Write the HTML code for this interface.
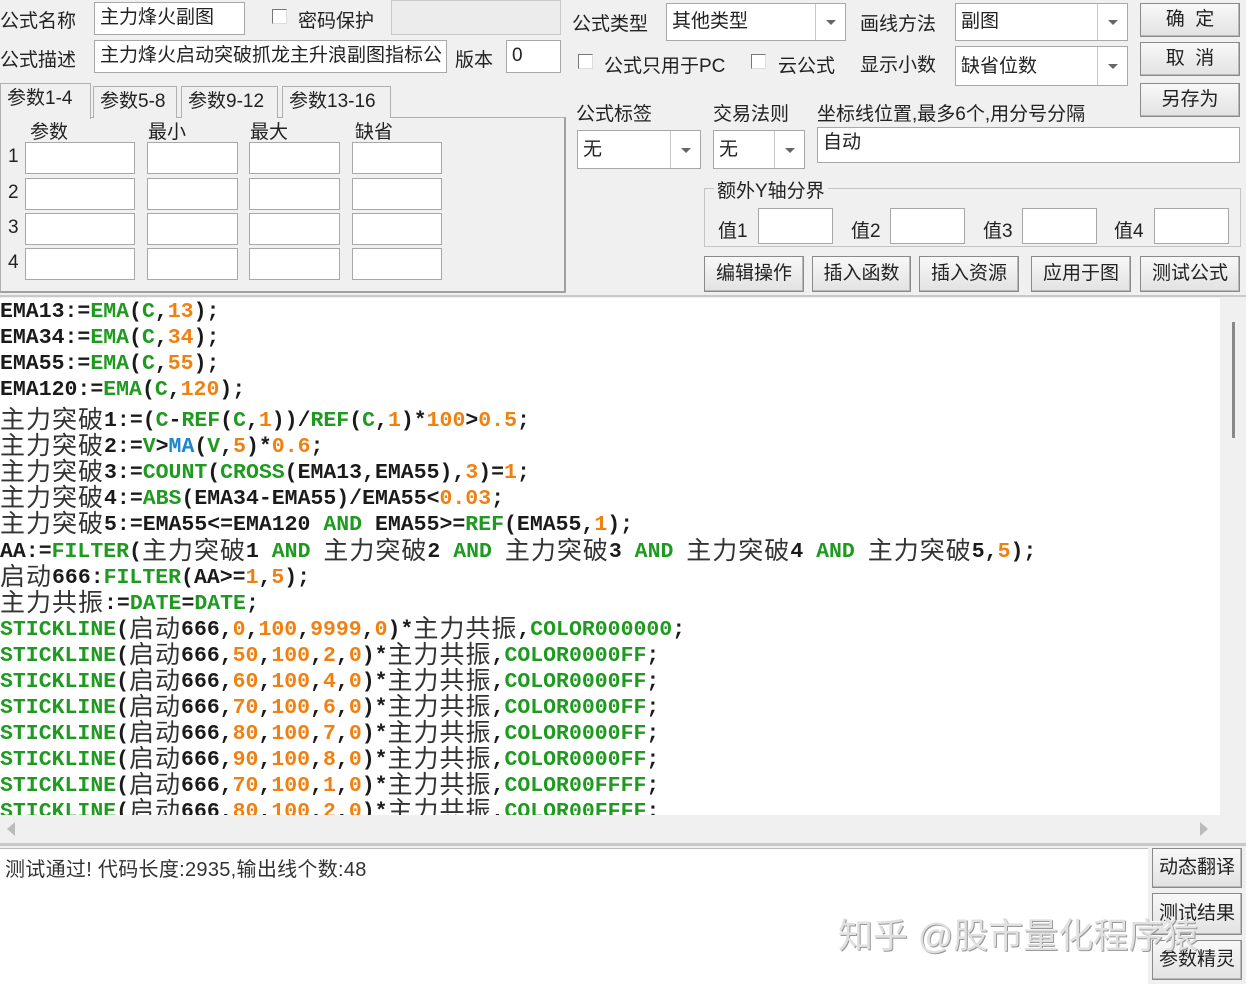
<!DOCTYPE html>
<html><head><meta charset="utf-8"><style>
*{box-sizing:border-box;margin:0;padding:0}
body{width:1246px;height:984px;background:#f0f0f0;position:relative;overflow:hidden;font-family:"Liberation Sans","Noto Sans CJK SC",sans-serif;font-size:19px;color:#222}
.a{position:absolute;white-space:nowrap}
.in{position:absolute;background:#fff;border:1px solid #a8a8a8;padding-left:5px;line-height:30px}
.btn{position:absolute;background:linear-gradient(#f8f8f8,#e2e2e2);border:1px solid #8a8a8a;box-shadow:inset -1px -1px 0 #b8b8b8;text-align:center;font-size:19px;color:#222}
.cb{position:absolute;width:15px;height:15px;background:#fff;border:1px solid #777;border-right-color:#ddd;border-bottom-color:#ddd}
.cmb{position:absolute;background:#fff;border:1px solid #a8a8a8;padding-left:5px}
.cmb i{position:absolute;right:0;top:0;bottom:0;width:30px;border-left:1px solid #c8c8c8;background:#fff}
.cmb i:after{content:"";position:absolute;left:10px;top:50%;margin-top:-2px;border-left:5px solid transparent;border-right:5px solid transparent;border-top:5px solid #666}
.tab{position:absolute;top:86px;height:32px;border:1px solid #b0b0b0;border-bottom:none;background:#f0f0f0;padding:0 6px;line-height:30px;font-size:19px}
#code{position:absolute;left:0;top:298px;width:1220px;height:517px;background:#fff;overflow:hidden}
.l{position:absolute;left:0;height:26px;line-height:26px;font-family:"Liberation Mono",monospace;font-weight:bold;font-size:21.5px;color:#1a1a1a;white-space:pre}
.g{color:#1f9a20}.o{color:#f08010}.b{color:#1a86d0}
.z{font-family:"Noto Sans CJK SC",sans-serif;font-weight:normal;font-size:25px;letter-spacing:1px;color:#333;position:relative;top:2px}
</style></head><body>
<div class="a" style="left:0;top:6px">公式名称</div>
<div class="in" style="left:94px;top:2px;width:151px;height:33px">主力烽火副图</div>
<div class="cb" style="left:272px;top:9px"></div>
<div class="a" style="left:298px;top:6px">密码保护</div>
<div class="a" style="left:391px;top:0;width:170px;height:35px;border:1px solid #c8c8c8;background:#ececec"></div>
<div class="a" style="left:0;top:45px">公式描述</div>
<div class="in" style="left:94px;top:40px;width:353px;height:33px;overflow:hidden">主力烽火启动突破抓龙主升浪副图指标公式</div>
<div class="a" style="left:455px;top:45px">版本</div>
<div class="in" style="left:506px;top:40px;width:55px;height:33px">0</div>

<div class="a" style="left:0;top:117px;width:566px;height:176px;border:1px solid #b0b0b0;border-right:2px solid #a0a0a0;border-bottom:2px solid #a0a0a0;background:#f0f0f0"></div>
<div class="tab" style="left:0;top:83px;height:36px;width:91px;border-bottom:none">参数1-4</div>
<div class="tab" style="left:93px;width:84px">参数5-8</div>
<div class="tab" style="left:181px;width:97px">参数9-12</div>
<div class="tab" style="left:282px;width:109px">参数13-16</div>
<div class="a" style="left:30px;top:117px">参数</div>
<div class="a" style="left:148px;top:117px">最小</div>
<div class="a" style="left:250px;top:117px">最大</div>
<div class="a" style="left:355px;top:117px">缺省</div>
<div class="a" style="left:8px;top:146px">1</div><div class="a" style="left:8px;top:182px">2</div><div class="a" style="left:8px;top:217px">3</div><div class="a" style="left:8px;top:252px">4</div>
<div class="in" style="left:25px;top:142px;width:110px;height:32px"></div><div class="in" style="left:147px;top:142px;width:91px;height:32px"></div><div class="in" style="left:249px;top:142px;width:91px;height:32px"></div><div class="in" style="left:352px;top:142px;width:90px;height:32px"></div>
<div class="in" style="left:25px;top:178px;width:110px;height:32px"></div><div class="in" style="left:147px;top:178px;width:91px;height:32px"></div><div class="in" style="left:249px;top:178px;width:91px;height:32px"></div><div class="in" style="left:352px;top:178px;width:90px;height:32px"></div>
<div class="in" style="left:25px;top:213px;width:110px;height:32px"></div><div class="in" style="left:147px;top:213px;width:91px;height:32px"></div><div class="in" style="left:249px;top:213px;width:91px;height:32px"></div><div class="in" style="left:352px;top:213px;width:90px;height:32px"></div>
<div class="in" style="left:25px;top:248px;width:110px;height:32px"></div><div class="in" style="left:147px;top:248px;width:91px;height:32px"></div><div class="in" style="left:249px;top:248px;width:91px;height:32px"></div><div class="in" style="left:352px;top:248px;width:90px;height:32px"></div>

<div class="a" style="left:572px;top:9px">公式类型</div>
<div class="cmb" style="left:666px;top:3px;width:180px;height:38px;line-height:36px">其他类型<i></i></div>
<div class="a" style="left:860px;top:9px">画线方法</div>
<div class="cmb" style="left:955px;top:3px;width:173px;height:38px;line-height:36px">副图<i></i></div>
<div class="btn" style="left:1140px;top:3px;width:100px;height:34px;line-height:32px">确&nbsp;&nbsp;定</div>
<div class="cb" style="left:578px;top:54px"></div>
<div class="a" style="left:604px;top:51px">公式只用于PC</div>
<div class="cb" style="left:751px;top:54px"></div>
<div class="a" style="left:778px;top:51px">云公式</div>
<div class="a" style="left:860px;top:50px">显示小数</div>
<div class="cmb" style="left:955px;top:46px;width:173px;height:40px;line-height:40px">缺省位数<i></i></div>
<div class="btn" style="left:1140px;top:42px;width:100px;height:34px;line-height:32px">取&nbsp;&nbsp;消</div>
<div class="btn" style="left:1140px;top:83px;width:100px;height:34px;line-height:32px">另存为</div>
<div class="a" style="left:576px;top:99px">公式标签</div>
<div class="a" style="left:713px;top:99px">交易法则</div>
<div class="a" style="left:817px;top:99px">坐标线位置,最多6个,用分号分隔</div>
<div class="cmb" style="left:577px;top:130px;width:124px;height:39px;line-height:37px">无<i></i></div>
<div class="cmb" style="left:713px;top:130px;width:92px;height:39px;line-height:37px">无<i></i></div>
<div class="in" style="left:817px;top:127px;width:423px;height:36px">自动</div>
<div class="a" style="left:704px;top:188px;width:537px;height:59px;border:1px solid #c4c4c4"></div>
<div class="a" style="left:714px;top:176px;background:#f0f0f0;padding:0 3px">额外Y轴分界</div>
<div class="a" style="left:718px;top:216px">值1</div><div class="in" style="left:758px;top:208px;width:75px;height:36px"></div>
<div class="a" style="left:851px;top:216px">值2</div><div class="in" style="left:890px;top:208px;width:75px;height:36px"></div>
<div class="a" style="left:983px;top:216px">值3</div><div class="in" style="left:1022px;top:208px;width:75px;height:36px"></div>
<div class="a" style="left:1114px;top:216px">值4</div><div class="in" style="left:1154px;top:208px;width:75px;height:36px"></div>
<div class="btn" style="left:704px;top:256px;width:100px;height:36px;line-height:34px">编辑操作</div>
<div class="btn" style="left:812px;top:256px;width:99px;height:36px;line-height:34px">插入函数</div>
<div class="btn" style="left:919px;top:256px;width:100px;height:36px;line-height:34px">插入资源</div>
<div class="btn" style="left:1031px;top:256px;width:100px;height:36px;line-height:34px">应用于图</div>
<div class="btn" style="left:1140px;top:256px;width:100px;height:36px;line-height:34px">测试公式</div>

<div class="a" style="left:0;top:295px;width:1246px;height:2px;background:#c8c8c8"></div>
<div id="code">
<div class="l" style="top:1px">EMA13:=<span class="g">EMA</span>(<span class="g">C</span>,<span class="o">13</span>);</div>
<div class="l" style="top:27px">EMA34:=<span class="g">EMA</span>(<span class="g">C</span>,<span class="o">34</span>);</div>
<div class="l" style="top:53px">EMA55:=<span class="g">EMA</span>(<span class="g">C</span>,<span class="o">55</span>);</div>
<div class="l" style="top:79px">EMA120:=<span class="g">EMA</span>(<span class="g">C</span>,<span class="o">120</span>);</div>
<div class="l" style="top:105px"><span class="z">主力突破</span>1:=(<span class="g">C</span>-<span class="g">REF</span>(<span class="g">C</span>,<span class="o">1</span>))/<span class="g">REF</span>(<span class="g">C</span>,<span class="o">1</span>)*<span class="o">100</span>&gt;<span class="o">0.5</span>;</div>
<div class="l" style="top:131px"><span class="z">主力突破</span>2:=<span class="g">V</span>&gt;<span class="b">MA</span>(<span class="g">V</span>,<span class="o">5</span>)*<span class="o">0.6</span>;</div>
<div class="l" style="top:157px"><span class="z">主力突破</span>3:=<span class="g">COUNT</span>(<span class="g">CROSS</span>(EMA13,EMA55),<span class="o">3</span>)=<span class="o">1</span>;</div>
<div class="l" style="top:183px"><span class="z">主力突破</span>4:=<span class="g">ABS</span>(EMA34-EMA55)/EMA55&lt;<span class="o">0.03</span>;</div>
<div class="l" style="top:209px"><span class="z">主力突破</span>5:=EMA55&lt;=EMA120 <span class="g">AND</span> EMA55&gt;=<span class="g">REF</span>(EMA55,<span class="o">1</span>);</div>
<div class="l" style="top:236px">AA:=<span class="g">FILTER</span>(<span class="z">主力突破</span>1 <span class="g">AND</span> <span class="z">主力突破</span>2 <span class="g">AND</span> <span class="z">主力突破</span>3 <span class="g">AND</span> <span class="z">主力突破</span>4 <span class="g">AND</span> <span class="z">主力突破</span>5,<span class="o">5</span>);</div>
<div class="l" style="top:262px"><span class="z">启动</span>666:<span class="g">FILTER</span>(AA&gt;=<span class="o">1</span>,<span class="o">5</span>);</div>
<div class="l" style="top:288px"><span class="z">主力共振</span>:=<span class="g">DATE</span>=<span class="g">DATE</span>;</div>
<div class="l" style="top:314px"><span class="g">STICKLINE</span>(<span class="z">启动</span>666,<span class="o">0</span>,<span class="o">100</span>,<span class="o">9999</span>,<span class="o">0</span>)*<span class="z">主力共振</span>,<span class="g">COLOR000000</span>;</div>
<div class="l" style="top:340px"><span class="g">STICKLINE</span>(<span class="z">启动</span>666,<span class="o">50</span>,<span class="o">100</span>,<span class="o">2</span>,<span class="o">0</span>)*<span class="z">主力共振</span>,<span class="g">COLOR0000FF</span>;</div>
<div class="l" style="top:366px"><span class="g">STICKLINE</span>(<span class="z">启动</span>666,<span class="o">60</span>,<span class="o">100</span>,<span class="o">4</span>,<span class="o">0</span>)*<span class="z">主力共振</span>,<span class="g">COLOR0000FF</span>;</div>
<div class="l" style="top:392px"><span class="g">STICKLINE</span>(<span class="z">启动</span>666,<span class="o">70</span>,<span class="o">100</span>,<span class="o">6</span>,<span class="o">0</span>)*<span class="z">主力共振</span>,<span class="g">COLOR0000FF</span>;</div>
<div class="l" style="top:418px"><span class="g">STICKLINE</span>(<span class="z">启动</span>666,<span class="o">80</span>,<span class="o">100</span>,<span class="o">7</span>,<span class="o">0</span>)*<span class="z">主力共振</span>,<span class="g">COLOR0000FF</span>;</div>
<div class="l" style="top:444px"><span class="g">STICKLINE</span>(<span class="z">启动</span>666,<span class="o">90</span>,<span class="o">100</span>,<span class="o">8</span>,<span class="o">0</span>)*<span class="z">主力共振</span>,<span class="g">COLOR0000FF</span>;</div>
<div class="l" style="top:470px"><span class="g">STICKLINE</span>(<span class="z">启动</span>666,<span class="o">70</span>,<span class="o">100</span>,<span class="o">1</span>,<span class="o">0</span>)*<span class="z">主力共振</span>,<span class="g">COLOR00FFFF</span>;</div>
<div class="l" style="top:496px"><span class="g">STICKLINE</span>(<span class="z">启动</span>666,<span class="o">80</span>,<span class="o">100</span>,<span class="o">2</span>,<span class="o">0</span>)*<span class="z">主力共振</span>,<span class="g">COLOR00FFFF</span>;</div>
</div>
<div class="a" style="left:1232px;top:322px;width:3px;height:116px;background:#888"></div>
<div class="a" style="left:0;top:815px;width:1244px;height:30px;background:#f0f0f0"></div>
<div class="a" style="left:7px;top:822px;border-top:7px solid transparent;border-bottom:7px solid transparent;border-right:8px solid #bbb"></div>
<div class="a" style="left:1200px;top:822px;border-top:7px solid transparent;border-bottom:7px solid transparent;border-left:8px solid #bbb"></div>
<div class="a" style="left:0;top:843px;width:1246px;height:3px;background:#c8c8c8"></div>
<div class="a" style="left:0;top:848px;width:1148px;height:136px;background:#fff;border-top:1px solid #bbb"></div>
<div class="a" style="left:5px;top:853px;font-size:20px;letter-spacing:0.3px;color:#333">测试通过! 代码长度:2935,输出线个数:48</div>
<div class="btn" style="left:1152px;top:848px;width:90px;height:40px;line-height:38px">动态翻译</div>
<div class="btn" style="left:1152px;top:893px;width:90px;height:42px;line-height:40px">测试结果</div>
<div class="btn" style="left:1152px;top:940px;width:90px;height:40px;line-height:38px">参数精灵</div>
<div class="a" style="left:838px;top:908px;font-size:35px;color:#e0e0e0;text-shadow:1px 1px 0 #999,-1px -1px 0 #fff">知乎 @股市量化程序猿</div>
</body></html>
